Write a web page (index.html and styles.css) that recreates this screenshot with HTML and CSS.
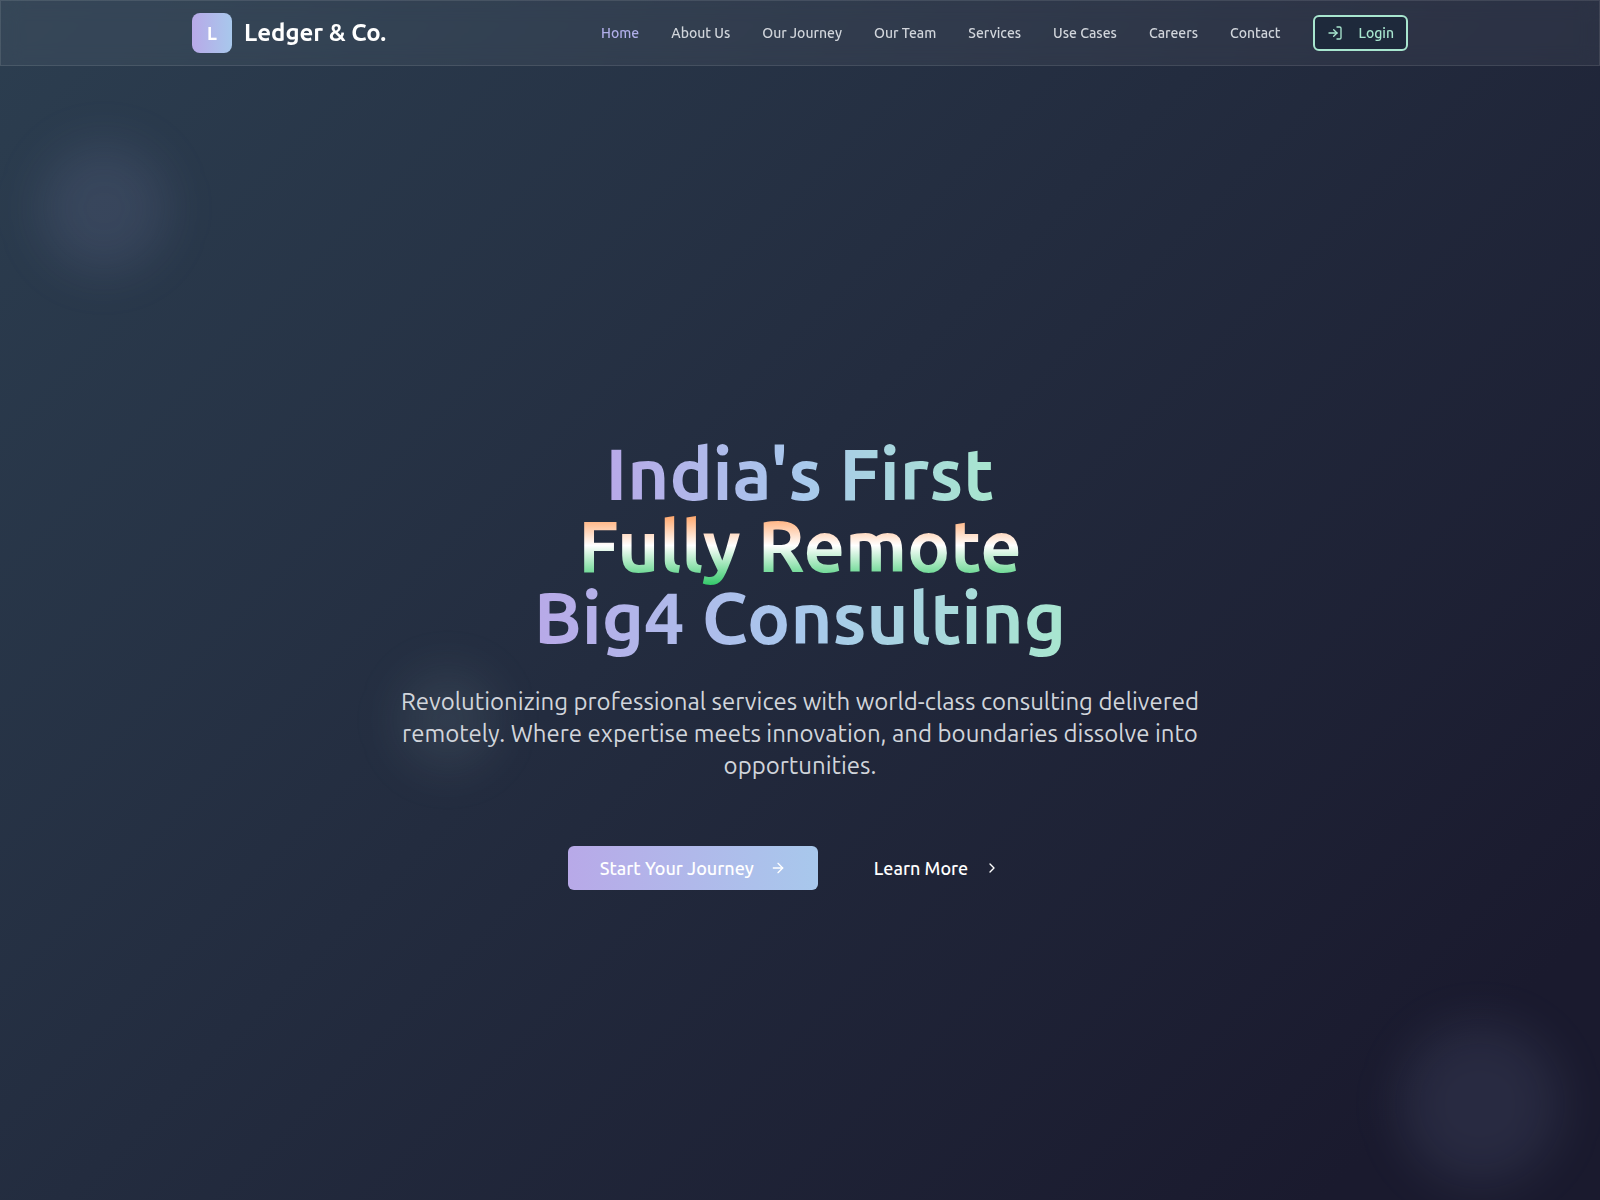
FILE: index.html
```html
<!DOCTYPE html>
<html lang="en">
<head>
  <meta charset="UTF-8">
  <meta name="viewport" content="width=device-width, initial-scale=1.0">
  <title>Ledger &amp; Co.</title>
  <link rel="stylesheet" href="styles.css">
</head>
<body>
  <header class="navbar">
    <div class="container">
      <a href="#" class="brand">
        <span class="logo">L</span>
        <span class="brand-name">Ledger &amp; Co.</span>
      </a>

      <nav class="nav-links">
        <a href="#" class="active">Home</a>
        <a href="#about">About Us</a>
        <a href="#journey">Our Journey</a>
        <a href="#team">Our Team</a>
        <a href="#services">Services</a>
        <a href="#use-cases">Use Cases</a>
        <a href="#careers">Careers</a>
        <a href="#contact">Contact</a>
        <button type="button" class="login-btn">
          <svg class="icon" viewBox="0 0 24 24">
            <path d="M15 3h4a2 2 0 0 1 2 2v14a2 2 0 0 1-2 2h-4" />
            <path d="M10 17l5-5-5-5" />
            <path d="M15 12H3" />
          </svg>
          Login
        </button>
      </nav>
    </div>
  </header>

  <main class="hero">
    <div class="blob blob-lavender"></div>
    <div class="blob blob-blue"></div>
    <div class="blob blob-mint"></div>

    <div class="hero-content">
      <h1>
        <span class="gradient-text">India's First</span><br>
        <span class="flag-text">Fully Remote</span><br>
        <span class="gradient-text">Big4 Consulting</span>
      </h1>
      <p>Revolutionizing professional services with world-class consulting delivered remotely. Where expertise meets innovation, and boundaries dissolve into opportunities.</p>

      <div class="actions">
        <button type="button" class="btn btn-primary">
          Start Your Journey
          <svg class="icon" viewBox="0 0 24 24">
            <path d="M5 12h14" />
            <path d="M12 5l7 7-7 7" />
          </svg>
        </button>
        <button type="button" class="btn btn-ghost">
          Learn More
          <svg class="icon" viewBox="0 0 24 24">
            <path d="M9 18l6-6-6-6" />
          </svg>
        </button>
      </div>
    </div>
  </main>
</body>
</html>
```
FILE: styles.css
```css
* { box-sizing: border-box; }

body {
  margin: 0;
  font-family: Ubuntu, "Noto Sans", sans-serif;
  background: #1a1a2e;
  color: #fff;
}

a { color: inherit; text-decoration: none; }

button {
  font-family: inherit;
  color: inherit;
  cursor: pointer;
}

.icon {
  width: 16px;
  height: 16px;
  fill: none;
  stroke: currentColor;
  stroke-width: 2;
  stroke-linecap: round;
  stroke-linejoin: round;
}

/* Navbar */
.navbar {
  position: fixed;
  top: 0;
  left: 0;
  right: 0;
  z-index: 10;
  background: rgba(255,255,255,0.05);
  border: 1px solid rgba(255,255,255,0.1);
  backdrop-filter: blur(10px);
}

.container {
  max-width: 1280px;
  height: 64px;
  margin: 0 auto;
  padding: 0 32px;
  display: flex;
  align-items: center;
  justify-content: space-between;
}

.brand {
  display: flex;
  align-items: center;
  gap: 12px;
}

.logo {
  width: 40px;
  height: 40px;
  border-radius: 8px;
  background: linear-gradient(90deg, #b8a9e8, #a8c8ec);
  display: flex;
  align-items: center;
  justify-content: center;
  font-size: 18px;
  line-height: 28px;
  font-weight: 700;
}

.brand-name {
  font-size: 24px;
  line-height: 32px;
  font-weight: 700;
}

.nav-links {
  display: flex;
  align-items: center;
  gap: 32px;
  font-size: 14px;
  font-weight: 500;
  color: #d1d5db;
}

.nav-links .active { color: #b0aee9; }

.login-btn {
  height: 36px;
  padding: 0 12px;
  display: flex;
  align-items: center;
  gap: 16px;
  font-size: 14px;
  font-weight: 500;
  color: #a8e6cf;
  background: #1e293b;
  border: 2px solid #a8e6cf;
  border-radius: 6px;
}

/* Hero */
.hero {
  position: relative;
  min-height: 100vh;
  padding-top: 128px;
  display: flex;
  align-items: center;
  justify-content: center;
  overflow: hidden;
  background: linear-gradient(135deg, #2c3e50, #1a1a2e 90%);
}

.blob {
  position: absolute;
  border-radius: 50%;
  filter: blur(24px);
}

.blob-lavender {
  top: 144px;
  left: 40px;
  width: 128px;
  height: 128px;
  background: rgba(176,169,232,0.11);
}

.blob-blue {
  right: 40px;
  bottom: 16px;
  width: 160px;
  height: 160px;
  background: rgba(168,188,236,0.1);
}

.blob-mint {
  top: 56%;
  left: 25%;
  width: 96px;
  height: 96px;
  background: rgba(176,208,208,0.1);
}

.hero-content {
  position: relative;
  max-width: 896px;
  text-align: center;
}

h1 {
  margin: 0 0 32px;
  font-size: 72px;
  line-height: 72px;
  font-weight: 700;
}

.gradient-text {
  background: linear-gradient(90deg, #b8a9e8, #a8c8ec, #a8e6cf);
  -webkit-background-clip: text;
  background-clip: text;
  color: transparent;
}

.flag-text {
  background: linear-gradient(180deg, #ff9f5f 10%, #fff 50%, #2ec866);
  -webkit-background-clip: text;
  background-clip: text;
  color: transparent;
}

.hero-content p {
  max-width: 816px;
  margin: 0 auto 64px;
  font-size: 24px;
  line-height: 32px;
  font-weight: 400;
  color: #d1d5db;
}

.actions {
  display: flex;
  justify-content: center;
  gap: 24px;
}

.btn {
  height: 44px;
  padding: 0 32px;
  display: flex;
  align-items: center;
  gap: 16px;
  font-size: 18px;
  font-weight: 500;
  border: none;
  border-radius: 6px;
}

.btn-primary { background: linear-gradient(90deg, #b8a9e8, #a8c8ec); }
.btn-ghost { background: none; }
```
